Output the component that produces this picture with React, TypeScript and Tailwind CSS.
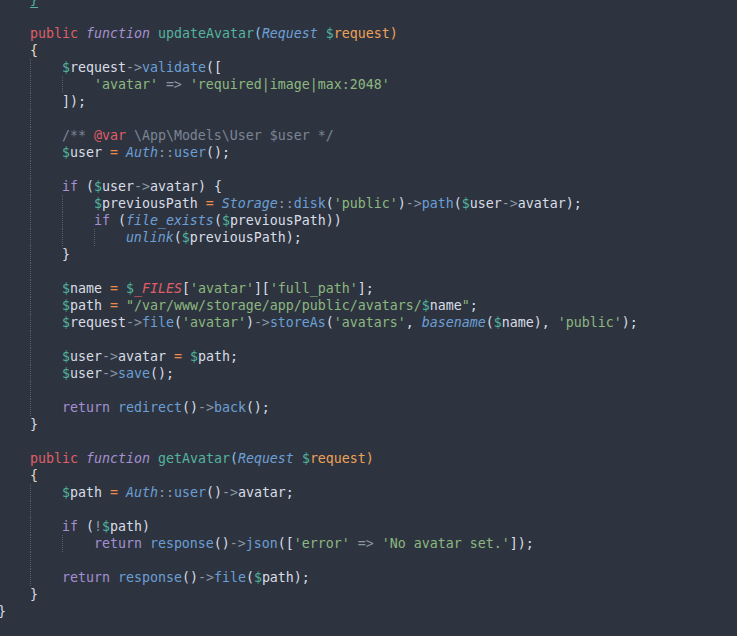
type Tok = [string, string];
type Line = { i: number; g: number; t: Tok[] };

const C: Record<string, string> = {
  k: "text-[#df5e68]",
  f: "italic text-[#a590d0]",
  n: "text-[#53b39e]",
  t: "italic text-[#6c9fd6]",
  d: "text-[#4fb39c]",
  o: "text-[#eea257]",
  v: "text-[#d8dde6]",
  a: "text-[#8b96a6]",
  m: "text-[#6a9fd6]",
  s: "text-[#8cb87f]",
  e: "text-[#ef8a4a]",
  c: "text-[#7b8595]",
  r: "text-[#a48fd2]",
  p: "text-[#8fc6e8]",
  b: "text-[#e9dcc2]",
  x: "italic text-[#df5e68]",
  u: "inline-block h-[17px] border-b border-[#4fb39c] text-[#4fb39c]",
};

// php variable: teal dollar, light name
const $ = (name: string): Tok[] => [
  ["d", "$"],
  ["v", name],
];
const sp: Tok = ["v", " "];
const eq: Tok[] = [sp, ["e", "="], sp];

const sig = (name: string): Tok[] => [
  ["k", "public"],
  sp,
  ["f", "function"],
  sp,
  ["n", name],
  ["p", "("],
  ["t", "Request"],
  sp,
  ["d", "$"],
  ["o", "request)"],
];

const lines: Line[] = [
  { i: 1, g: 0, t: [["u", "}"]] },
  { i: 0, g: 0, t: [] },
  { i: 1, g: 0, t: sig("updateAvatar") },
  { i: 1, g: 0, t: [["b", "{"]] },
  { i: 2, g: 1, t: [...$("request"), ["a", "->"], ["m", "validate"], ["v", "(["]] },
  {
    i: 3,
    g: 2,
    t: [["s", "'avatar'"], sp, ["a", "=>"], sp, ["s", "'required|image|max:2048'"]],
  },
  { i: 2, g: 1, t: [["v", "]);"]] },
  { i: 0, g: 1, t: [] },
  {
    i: 2,
    g: 1,
    t: [["c", "/** "], ["k", "@var"], ["c", " \\App\\Models\\User $user */"]],
  },
  {
    i: 2,
    g: 1,
    t: [...$("user"), ...eq, ["t", "Auth"], ["a", "::"], ["m", "user"], ["v", "();"]],
  },
  { i: 0, g: 1, t: [] },
  {
    i: 2,
    g: 1,
    t: [["r", "if"], ["v", " ("], ...$("user"), ["a", "->"], ["v", "avatar) {"]],
  },
  {
    i: 3,
    g: 2,
    t: [
      ...$("previousPath"),
      ...eq,
      ["t", "Storage"],
      ["a", "::"],
      ["m", "disk"],
      ["v", "("],
      ["s", "'public'"],
      ["v", ")"],
      ["a", "->"],
      ["m", "path"],
      ["v", "("],
      ...$("user"),
      ["a", "->"],
      ["v", "avatar);"],
    ],
  },
  {
    i: 3,
    g: 2,
    t: [["r", "if"], ["v", " ("], ["t", "file_exists"], ["v", "("], ...$("previousPath"), ["v", "))"]],
  },
  { i: 4, g: 3, t: [["t", "unlink"], ["v", "("], ...$("previousPath"), ["v", ");"]] },
  { i: 2, g: 1, t: [["v", "}"]] },
  { i: 0, g: 1, t: [] },
  {
    i: 2,
    g: 1,
    t: [
      ...$("name"),
      ...eq,
      ["d", "$"],
      ["x", "_FILES"],
      ["v", "["],
      ["s", "'avatar'"],
      ["v", "]["],
      ["s", "'full_path'"],
      ["v", "];"],
    ],
  },
  {
    i: 2,
    g: 1,
    t: [
      ...$("path"),
      ...eq,
      ["s", '"/var/www/storage/app/public/avatars/'],
      ...$("name"),
      ["s", '"'],
      ["v", ";"],
    ],
  },
  {
    i: 2,
    g: 1,
    t: [
      ...$("request"),
      ["a", "->"],
      ["m", "file"],
      ["v", "("],
      ["s", "'avatar'"],
      ["v", ")"],
      ["a", "->"],
      ["m", "storeAs"],
      ["v", "("],
      ["s", "'avatars'"],
      ["v", ", "],
      ["t", "basename"],
      ["v", "("],
      ...$("name"),
      ["v", "), "],
      ["s", "'public'"],
      ["v", ");"],
    ],
  },
  { i: 0, g: 1, t: [] },
  { i: 2, g: 1, t: [...$("user"), ["a", "->"], ["v", "avatar"], ...eq, ...$("path"), ["v", ";"]] },
  { i: 2, g: 1, t: [...$("user"), ["a", "->"], ["m", "save"], ["v", "();"]] },
  { i: 0, g: 1, t: [] },
  {
    i: 2,
    g: 1,
    t: [["r", "return"], sp, ["m", "redirect"], ["v", "()"], ["a", "->"], ["m", "back"], ["v", "();"]],
  },
  { i: 1, g: 0, t: [["v", "}"]] },
  { i: 0, g: 0, t: [] },
  { i: 1, g: 0, t: sig("getAvatar") },
  { i: 1, g: 0, t: [["b", "{"]] },
  {
    i: 2,
    g: 1,
    t: [...$("path"), ...eq, ["t", "Auth"], ["a", "::"], ["m", "user"], ["v", "()"], ["a", "->"], ["v", "avatar;"]],
  },
  { i: 0, g: 1, t: [] },
  { i: 2, g: 1, t: [["r", "if"], ["v", " ("], ["a", "!"], ...$("path"), ["v", ")"]] },
  {
    i: 3,
    g: 2,
    t: [
      ["r", "return"],
      sp,
      ["m", "response"],
      ["v", "()"],
      ["a", "->"],
      ["m", "json"],
      ["v", "(["],
      ["s", "'error'"],
      sp,
      ["a", "=>"],
      sp,
      ["s", "'No avatar set.'"],
      ["v", "]);"],
    ],
  },
  { i: 0, g: 1, t: [] },
  {
    i: 2,
    g: 1,
    t: [["r", "return"], sp, ["m", "response"], ["v", "()"], ["a", "->"], ["m", "file"], ["v", "("], ...$("path"), ["v", ");"]],
  },
  { i: 1, g: 0, t: [["v", "}"]] },
  { i: 0, g: 0, t: [["v", "}"]] },
];

const CodeLine = ({ line }: { line: Line }) => {
  const blocks = Math.max(line.i, line.t.length ? 0 : line.g + 1);
  return (
    <div className="flex h-[17px] leading-[17px]">
      {Array.from({ length: blocks }).map((_, j) => (
        <span
          key={j}
          className={`h-full w-[4ch] shrink-0 ${
            j >= 1 && j <= line.g ? "border-l border-dotted border-[#555d6b]" : ""
          }`}
        />
      ))}
      <span className="whitespace-pre">
        {line.t.map(([k, text], j) => (
          <span key={j} className={C[k]}>
            {text}
          </span>
        ))}
      </span>
    </div>
  );
};

export default function App() {
  return (
    <div className="h-[636px] w-[737px] overflow-hidden bg-[#2e343f] font-['DejaVu_Sans_Mono',monospace] text-[13.29px] text-[#d8dde6]">
      <div className="ml-[-2px] mt-[-9.5px]">
        {lines.map((line, i) => (
          <CodeLine key={i} line={line} />
        ))}
      </div>
    </div>
  );
}
